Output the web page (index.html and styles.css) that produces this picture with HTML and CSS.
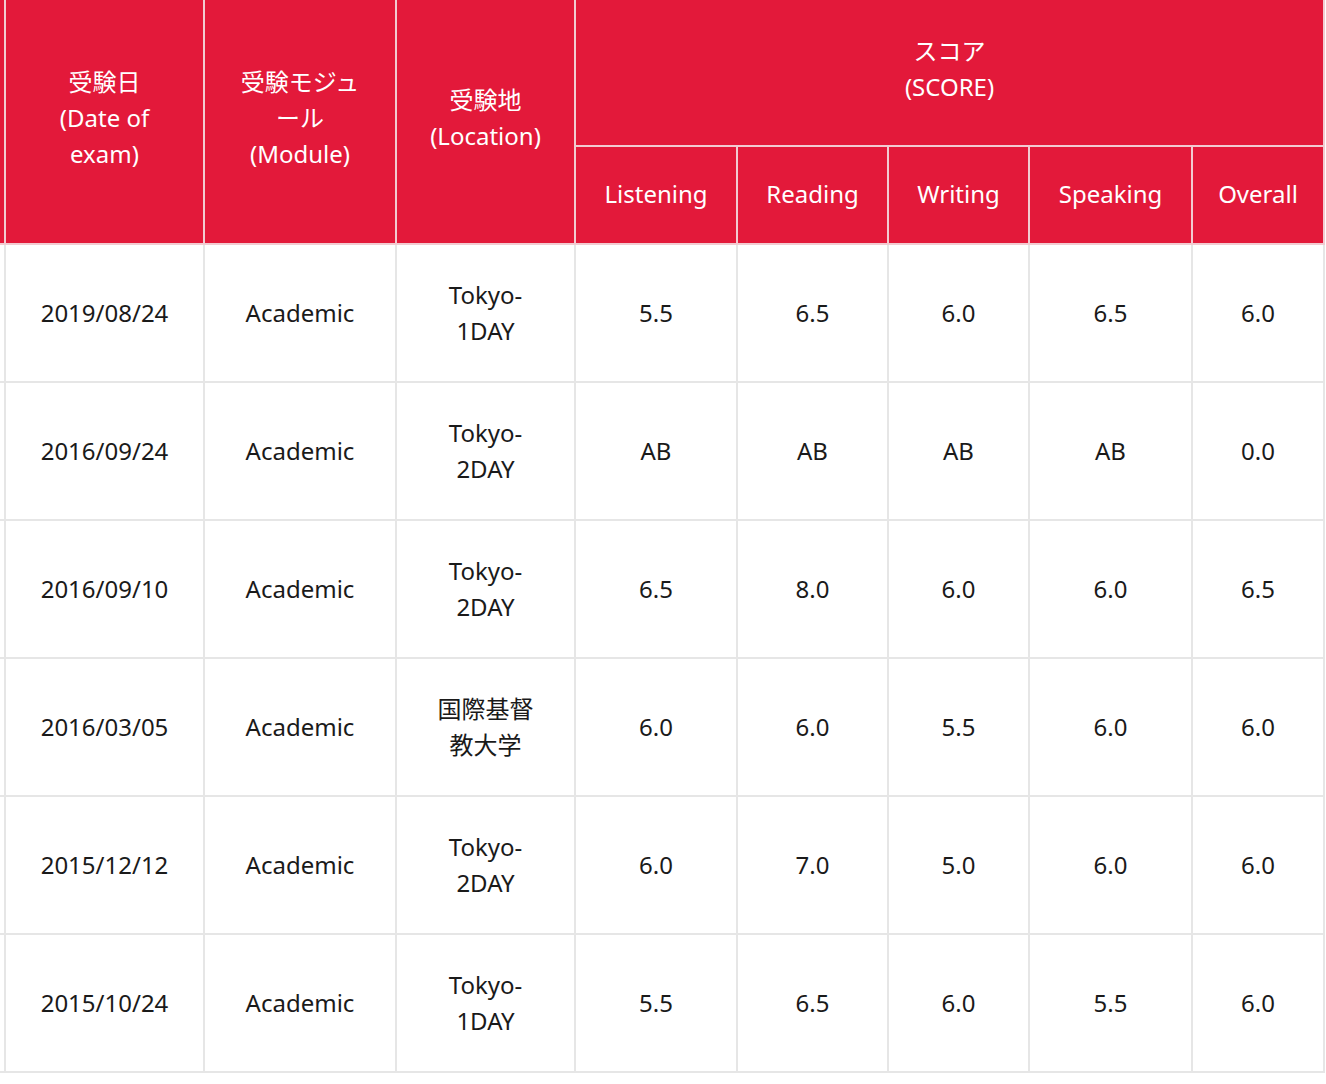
FILE: index.html
```html
<!DOCTYPE html>
<html lang="ja">
<head>
<meta charset="utf-8">
<title>IELTS スコア</title>
<link rel="stylesheet" href="styles.css">
</head>
<body>
<table class="scores">
  <colgroup>
    <col class="c-edge">
    <col class="c-date">
    <col class="c-module">
    <col class="c-loc">
    <col class="c-listen">
    <col class="c-read">
    <col class="c-write">
    <col class="c-speak">
    <col class="c-overall">
  </colgroup>
  <thead>
    <tr class="head-top">
      <th class="edge" rowspan="2"></th>
      <th rowspan="2">受験日<br>(Date of<br>exam)</th>
      <th rowspan="2">受験モジュ<br>ール<br>(Module)</th>
      <th rowspan="2">受験地<br>(Location)</th>
      <th colspan="5">スコア<br>(SCORE)</th>
    </tr>
    <tr class="head-sub">
      <th>Listening</th>
      <th>Reading</th>
      <th>Writing</th>
      <th>Speaking</th>
      <th>Overall</th>
    </tr>
  </thead>
  <tbody>
    <tr>
      <td class="edge"></td>
      <td>2019/08/24</td><td>Academic</td><td>Tokyo-<br>1DAY</td>
      <td>5.5</td><td>6.5</td><td>6.0</td><td>6.5</td><td>6.0</td>
    </tr>
    <tr>
      <td class="edge"></td>
      <td>2016/09/24</td><td>Academic</td><td>Tokyo-<br>2DAY</td>
      <td>AB</td><td>AB</td><td>AB</td><td>AB</td><td>0.0</td>
    </tr>
    <tr>
      <td class="edge"></td>
      <td>2016/09/10</td><td>Academic</td><td>Tokyo-<br>2DAY</td>
      <td>6.5</td><td>8.0</td><td>6.0</td><td>6.0</td><td>6.5</td>
    </tr>
    <tr>
      <td class="edge"></td>
      <td>2016/03/05</td><td>Academic</td><td>国際基督<br>教大学</td>
      <td>6.0</td><td>6.0</td><td>5.5</td><td>6.0</td><td>6.0</td>
    </tr>
    <tr>
      <td class="edge"></td>
      <td>2015/12/12</td><td>Academic</td><td>Tokyo-<br>2DAY</td>
      <td>6.0</td><td>7.0</td><td>5.0</td><td>6.0</td><td>6.0</td>
    </tr>
    <tr>
      <td class="edge"></td>
      <td>2015/10/24</td><td>Academic</td><td>Tokyo-<br>1DAY</td>
      <td>5.5</td><td>6.5</td><td>6.0</td><td>5.5</td><td>6.0</td>
    </tr>
  </tbody>
</table>
</body>
</html>
```
FILE: styles.css
```css
html, body {
  margin: 0;
  padding: 0;
  background: #ffffff;
}

body {
  font-family: "Noto Sans", "Noto Sans CJK JP", sans-serif;
  font-size: 24px;
  line-height: 36px;
  color: #1a1a1a;
}

.scores {
  table-layout: fixed;
  border-collapse: separate;
  border-spacing: 0;
  width: 1325px;
}

.c-edge { width: 6px; }
.c-date { width: 199px; }
.c-module { width: 192px; }
.c-loc { width: 179px; }
.c-listen { width: 162px; }
.c-read { width: 151px; }
.c-write { width: 141px; }
.c-speak { width: 163px; }
.c-overall { width: 132px; }

.scores th,
.scores td {
  padding: 0;
  text-align: center;
  vertical-align: middle;
  box-sizing: border-box;
}

.scores th {
  background: #e3193a;
  color: #ffffff;
  font-weight: 400;
  border-right: 2px solid #f2cbd1;
  border-bottom: 2px solid #f2cbd1;
}

.scores td {
  background: #ffffff;
  border-right: 2px solid #e6e6e6;
  border-bottom: 2px solid #e6e6e6;
}

.head-top { height: 147px; }
.head-top th { padding-bottom: 8px; }
.head-sub { height: 98px; }
.head-sub th { padding-bottom: 2px; }
.scores tbody tr { height: 138px; }

.scores .edge {
  padding: 0;
}
```
